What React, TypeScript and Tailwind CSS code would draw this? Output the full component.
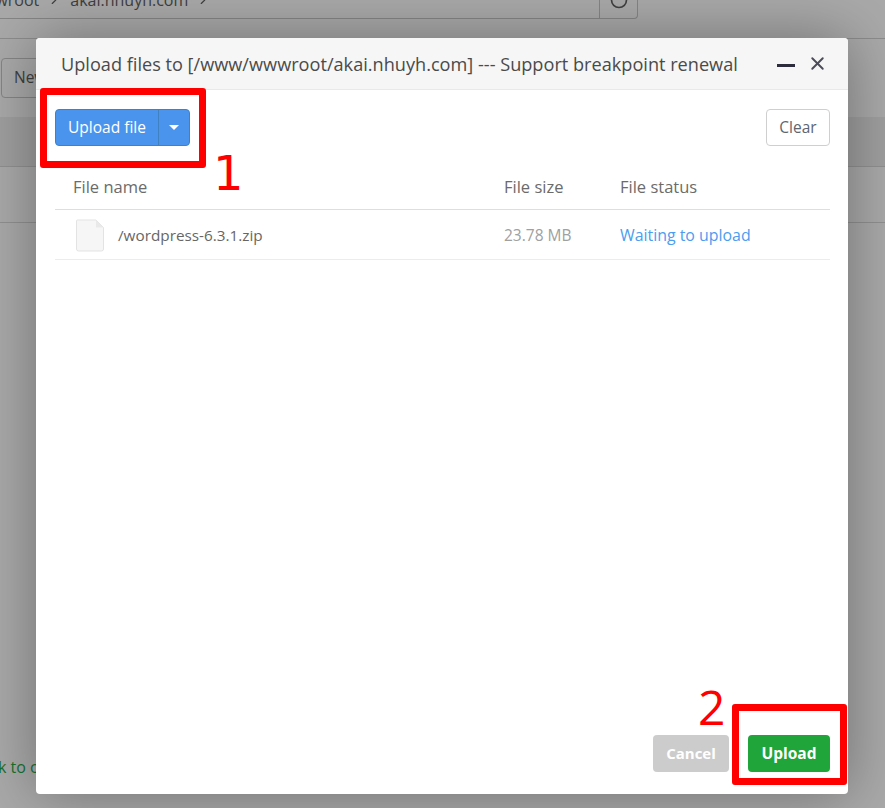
import { ChevronRight, RotateCw, X } from "lucide-react";

function FileIcon() {
  return (
    <svg width="30" height="33" viewBox="0 0 30 33" className="shrink-0">
      <path
        d="M2.5 1 H21 L28.5 8.5 V30 Q28.5 32 26.5 32 H3.5 Q1.5 32 1.5 30 V2 Q1.5 1 2.5 1 Z"
        fill="#f6f6f6"
        stroke="#e3e3e3"
        strokeWidth="1"
      />
      <path d="M21 1 V8.5 H28.5 Z" fill="#e9e9e9" />
    </svg>
  );
}

function Backdrop() {
  return (
    <div className="flex flex-col h-full text-[#3f3f3f]">
      {/* Breadcrumb */}
      <div className="h-[39px] border-b border-[#8c8c8c] shrink-0">
        <div className="w-[638px] h-[19px] border-b border-r border-[#858585] rounded-br flex items-end justify-between overflow-hidden">
          <div className="flex items-center gap-[8px] text-[16px] leading-[20px] translate-y-[-8px] -ml-[17px]">
            <span>wwroot</span>
            <ChevronRight size={14} />
            <span className="ml-[1px]">akai.nhuyh.com</span>
            <ChevronRight size={14} />
          </div>
          <div className="w-[38px] h-full border-l border-[#858585] flex items-end justify-center overflow-hidden">
            <RotateCw size={20} className="translate-y-[-8px]" />
          </div>
        </div>
      </div>

      {/* Toolbar */}
      <div className="h-[78px] shrink-0 flex items-center px-[1px]">
        <div className="w-[60px] h-[40px] border border-[#858585] rounded flex items-center pl-[12px] text-[15.5px]">
          New
        </div>
      </div>

      {/* Table head and rows */}
      <div className="h-[50px] shrink-0 bg-[#9f9f9f] border-b border-[#909090]" />
      <div className="h-[56px] shrink-0 border-b border-[#909090]" />

      {/* Footer link */}
      <div className="mt-auto mb-[31px] -ml-[29px] text-[16px] leading-5 text-[#17722f] whitespace-nowrap">
        Back to current
      </div>
    </div>
  );
}

function UploadModal() {
  return (
    <div className="absolute left-[36px] top-[38px] w-[812px] h-[756px] bg-white rounded-sm shadow-[0_0_60px_rgba(0,0,0,0.34)] flex flex-col overflow-hidden">
      <div className="h-[52px] shrink-0 bg-[#f6f6f6] border-b border-[#e9e9e9] flex items-center pl-[25px] pr-[20px] justify-between">
        <h1 className="text-[18.15px] text-[#4a4a4a] whitespace-nowrap translate-y-[1px]">
          Upload files to [/www/wwwroot/akai.nhuyh.com] --- Support breakpoint renewal
        </h1>
        <div className="flex items-center gap-[12px]">
          <span className="block w-[18px] h-[3px] mt-[3px] bg-[#2c2c3c]" />
          <X size={21} strokeWidth={2.2} className="text-[#4b4b5a]" />
        </div>
      </div>

      <div className="pl-[19px] pr-[18px] pt-[19px] flex justify-between shrink-0">
        <div className="h-[37px] w-[135px] flex rounded bg-[#4a94ee] border border-[#3f82c4] text-white text-[15.5px]">
          <span className="w-[103px] flex items-center justify-center border-r border-[#3f82c4]">Upload file</span>
          <span className="flex-1 flex items-center justify-center">
            <span className="block w-0 h-0 border-x-[5px] border-x-transparent border-t-[5px] border-t-white" />
          </span>
        </div>
        <button className="h-[37px] w-[64px] rounded border border-[#cfcfcf] bg-white text-[15.5px] text-[#5c6670]">
          Clear
        </button>
      </div>

      <div className="ml-[19px] mr-[18px] mt-[18px] shrink-0">
        <div className="h-[46px] grid grid-cols-[431px_116px_1fr] items-center pl-[18px] pt-[2px] text-[16.5px] text-[#6b6b6b] border-b border-[#dedede]">
          <span>File name</span>
          <span>File size</span>
          <span>File status</span>
        </div>
        <div className="h-[50px] grid grid-cols-[431px_116px_1fr] items-center pl-[18px] border-b border-[#ececec]">
          <div className="flex items-center gap-[13px] text-[15.3px] text-[#666]">
            <span className="ml-[2px] mt-[1px]"><FileIcon /></span>
            <span className="translate-y-[1px]">/wordpress-6.3.1.zip</span>
          </div>
          <span className="text-[15.5px] text-[#a0a0a0] translate-y-[1px]">23.78 MB</span>
          <span className="text-[15.9px] text-[#4a9df0] translate-y-[1px]">Waiting to upload</span>
        </div>
      </div>

      <div className="mt-auto mb-[22px] pr-[18px] flex justify-end gap-[19px] font-bold text-white shrink-0">
        <button className="w-[76px] h-[37px] rounded-sm bg-[#cccccc] text-[15px]">Cancel</button>
        <button className="w-[82px] h-[37px] rounded-sm bg-[#20a53a] text-[15.5px]">Upload</button>
      </div>
    </div>
  );
}

export default function App() {
  return (
    <div className="relative w-[885px] h-[808px] overflow-hidden bg-[#a9a9a9] font-['Open_Sans','Noto_Sans',sans-serif]">
      <Backdrop />
      <UploadModal />

      {/* Red annotations */}
      <div className="absolute left-[40px] top-[88px] w-[166px] h-[80px] border-[7px] border-[#ff0000] rounded-[3px]" />
      <div className="absolute left-[732px] top-[704px] w-[115px] h-[81px] border-[7px] border-[#ff0000] rounded-[3px]" />
      <span className="absolute left-[213px] top-[145px] font-['DejaVu_Sans',sans-serif] text-[48px] leading-[56px] text-[#ff0000]">1</span>
      <span className="absolute left-[698px] top-[679px] text-[48px] leading-[56px] text-[#ff0000]">2</span>
    </div>
  );
}
